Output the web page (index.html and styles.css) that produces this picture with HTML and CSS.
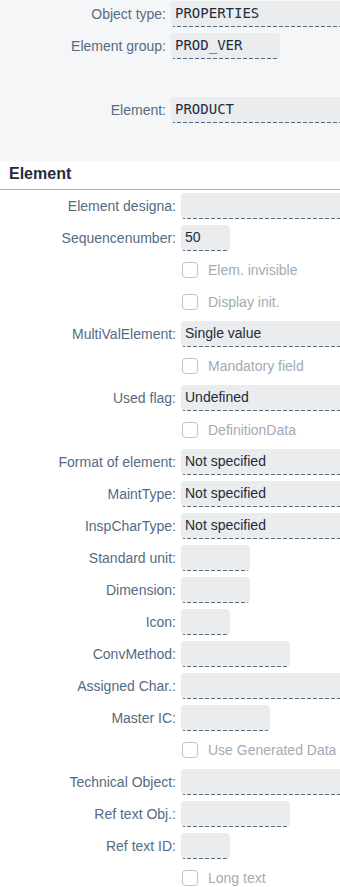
FILE: index.html
```html
<!DOCTYPE html>
<html lang="en">
<head>
  <meta charset="UTF-8">
  <meta name="viewport" content="width=device-width, initial-scale=1.0">
  <title>Element</title>
  <link rel="stylesheet" href="styles.css">
</head>
<body>
  <div class="page">
    <!-- 头部选择区 -->
    <div class="head">
      <div class="form head-form">
        <label class="lbl">Object type:</label>
        <div class="field full mono">PROPERTIES</div>
        <label class="lbl">Element group:</label>
        <div class="field w109 mono">PROD_VER</div>
        <div class="spacer"></div>
        <label class="lbl">Element:</label>
        <div class="field full mono">PRODUCT</div>
      </div>
    </div>

    <!-- 元素详情 -->
    <div class="section">
      <h2 class="title">Element</h2>
      <div class="form body-form">
        <label class="lbl">Element designa:</label>
        <div class="field full"></div>
        <label class="lbl">Sequencenumber:</label>
        <div class="field w49">50</div>
        <span></span>
        <div class="check"><span class="box"></span>Elem. invisible</div>
        <span></span>
        <div class="check"><span class="box"></span>Display init.</div>
        <label class="lbl">MultiValElement:</label>
        <div class="field full">Single value</div>
        <span></span>
        <div class="check"><span class="box"></span>Mandatory field</div>
        <label class="lbl">Used flag:</label>
        <div class="field full">Undefined</div>
        <span></span>
        <div class="check"><span class="box"></span>DefinitionData</div>
        <label class="lbl">Format of element:</label>
        <div class="field full">Not specified</div>
        <label class="lbl">MaintType:</label>
        <div class="field full">Not specified</div>
        <label class="lbl">InspCharType:</label>
        <div class="field full">Not specified</div>
        <label class="lbl">Standard unit:</label>
        <div class="field w69"></div>
        <label class="lbl">Dimension:</label>
        <div class="field w69"></div>
        <label class="lbl">Icon:</label>
        <div class="field w49"></div>
        <label class="lbl">ConvMethod:</label>
        <div class="field w109"></div>
        <label class="lbl">Assigned Char.:</label>
        <div class="field full"></div>
        <label class="lbl">Master IC:</label>
        <div class="field w89"></div>
        <span></span>
        <div class="check"><span class="box"></span>Use Generated Data</div>
        <label class="lbl">Technical Object:</label>
        <div class="field full"></div>
        <label class="lbl">Ref text Obj.:</label>
        <div class="field w109"></div>
        <label class="lbl">Ref text ID:</label>
        <div class="field w49"></div>
        <span></span>
        <div class="check"><span class="box"></span>Long text</div>
      </div>
    </div>
  </div>
</body>
</html>
```

FILE: styles.css
```css
* {
  margin: 0;
  padding: 0;
  box-sizing: border-box;
}
body {
  font-family: "Liberation Sans", Arial, sans-serif;
  font-size: 14px;
  color: #1d2d3e;
  background: #fff;
}
.head {
  background: #f5f6f7;
  padding: 1px 0 38px;
}
.form {
  display: grid;
  column-gap: 5px;
  row-gap: 6px;
  grid-auto-rows: 26px;
}
.head-form {
  grid-template-columns: 166px 1fr;
}
.body-form {
  grid-template-columns: 176px 1fr;
  padding-top: 3px;
}
.spacer {
  grid-column: 1 / -1;
}
.lbl {
  color: #556b82;
  text-align: right;
  line-height: 26px;
  white-space: nowrap;
}
/* 虚线下边框：4px 线段 2px 间隔 */
.field {
  height: 26px;
  line-height: 25px;
  padding: 0 4px;
  background-color: #eaecee;
  background-image: repeating-linear-gradient(to right, #556b82 0 4px, transparent 4px 6px);
  background-repeat: no-repeat;
  background-size: 100% 1px;
  background-position: 0 100%;
  border-radius: 4px;
  white-space: nowrap;
  overflow: hidden;
}
.mono {
  font-family: "DejaVu Sans Mono", "Liberation Mono", monospace;
}
.full {
  border-radius: 4px 0 0 4px;
}
.w49 {
  width: 49px;
}
.w69 {
  width: 69px;
}
.w89 {
  width: 89px;
}
.w109 {
  width: 109px;
}
.section {
  background: #fff;
}
.title {
  font-size: 16px;
  font-weight: bold;
  color: #1d2d3e;
  padding: 0 9px;
  height: 29px;
  line-height: 25px;
  border-bottom: 1px solid #a9b4be;
}
.check {
  display: flex;
  align-items: center;
  color: #a2abb5;
  white-space: nowrap;
}
.box {
  width: 16px;
  height: 16px;
  margin: 0 10px 0 1px;
  border: 1px solid #bcc3ca;
  border-radius: 4px;
  background: #fff;
}
```
